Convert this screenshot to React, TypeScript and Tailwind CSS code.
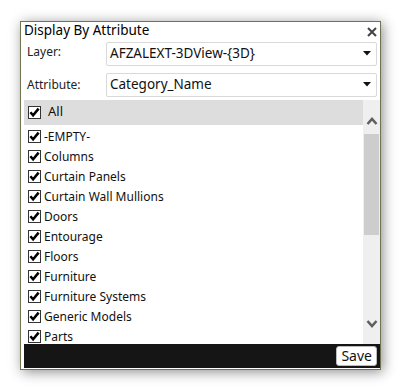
import React from "react";

const items = [
  "-EMPTY-",
  "Columns",
  "Curtain Panels",
  "Curtain Wall Mullions",
  "Doors",
  "Entourage",
  "Floors",
  "Furniture",
  "Furniture Systems",
  "Generic Models",
  "Parts",
];

function Check() {
  return (
    <svg width="13" height="13" viewBox="0 0 13 13" className="shrink-0">
      <rect x="0.5" y="0.5" width="12" height="12" fill="#fff" stroke="#333" />
      <path d="M2.4 6.2 L5.1 9.3 L10.6 2.6" fill="none" stroke="#000" strokeWidth="2.5" strokeLinecap="butt" strokeLinejoin="miter" />
    </svg>
  );
}

function Caret() {
  return (
    <svg width="8" height="5" viewBox="0 0 8 5" className="shrink-0">
      <path d="M0 0 H8 L4 4.5 Z" fill="#111" />
    </svg>
  );
}

function Select({ value }: { value: string }) {
  return (
    <div className="flex h-[24px] w-[271px] items-center justify-between rounded-[2px] border border-[#d9d9d9] bg-white pl-[3px] pr-[5px]">
      <span className="text-[13.5px] text-[#111]">{value}</span>
      <Caret />
    </div>
  );
}

export default function App() {
  return (
    <div
      className="h-[390px] w-[401px] bg-white pl-[20px] pt-[21px]"
      style={{ fontFamily: '"Noto Sans", "Open Sans", sans-serif' }}
    >
      <div className="flex h-[349px] w-[361px] flex-col border border-[#6f7350] bg-white pb-[1px] pl-[3px] shadow-[2px_2px_12px_rgba(0,0,0,0.45)]">
        <div className="flex h-[18px] items-center justify-between pr-[3px]">
          <span className="text-[13.5px] leading-none text-black">Display By Attribute</span>
          <svg width="10" height="10" viewBox="0 0 10 10" className="mt-[3px]">
            <path d="M1 1 L9 9 M9 1 L1 9" stroke="#444" strokeWidth="2" />
          </svg>
        </div>
        <div className="mt-[2px] flex items-center pr-[3px]">
          <span className="w-[82px] pl-[3px] text-[12px] text-[#222] mt-[-4px]">Layer:</span>
          <Select value="AFZALEXT-3DView-{3D}" />
        </div>
        <div className="mt-[7px] flex items-center pr-[3px]">
          <span className="w-[82px] pl-[3px] text-[12px] text-[#222]">Attribute:</span>
          <Select value="Category_Name" />
        </div>
        <div className="mt-[3px] flex h-[244px]">
          <div className="flex min-w-0 flex-1 flex-col overflow-hidden">
            <div className="flex h-[25px] shrink-0 items-center gap-[7px] bg-[#dddddd] pl-[4px]">
              <Check />
              <span className="text-[13px] text-[#111]">All</span>
            </div>
            <div className="pt-[5px]">
              {items.map((t) => (
                <div key={t} className="flex h-[20px] items-start gap-[3px] pl-[4px]">
                  <Check />
                  <span className="mt-[-2px] text-[12px] text-[#111]">{t}</span>
                </div>
              ))}
            </div>
          </div>
          <div className="flex w-[17px] flex-col items-center bg-[#efefef]">
            <svg width="12" height="8" viewBox="0 0 12 8" className="mt-[17px]">
              <path d="M1.5 7 L6 2 L10.5 7" fill="none" stroke="#5f5f5f" strokeWidth="2.6" />
            </svg>
            <div className="mt-[9px] h-[101px] w-[15px] bg-[#cdcdcd]" />
            <div className="flex-1" />
            <svg width="12" height="9" viewBox="0 0 12 9" className="mb-[16px]">
              <path d="M1.5 2 L6 7 L10.5 2" fill="none" stroke="#5f5f5f" strokeWidth="2.6" />
            </svg>
          </div>
        </div>
        <div className="flex h-[25px] items-center justify-end bg-[#151515] pr-[3px]">
          <button className="h-[20px] rounded-[3px] border border-[#bbb] bg-white px-[4px] text-[14px] leading-none text-[#111]">
            Save
          </button>
        </div>
      </div>
    </div>
  );
}
